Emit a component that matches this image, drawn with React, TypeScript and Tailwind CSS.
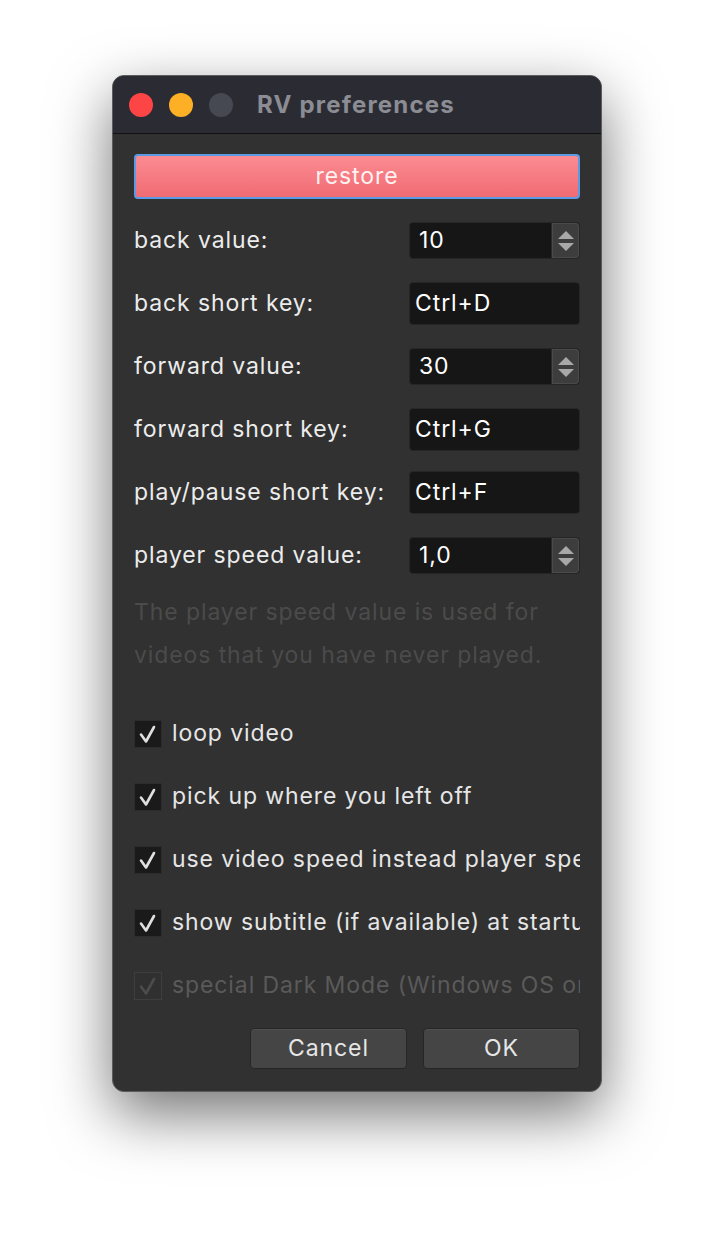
import React from "react";

const font = { fontFamily: "Inter, 'Noto Sans', 'Liberation Sans', sans-serif" };

function SpinArrows() {
  return (
    <div className="flex h-full w-[28px] items-center justify-center rounded-r-[4px] border-l border-[#2a2a2a] bg-[#3d3d3d] shadow-[inset_0_0_0_1px_#4a4a4a]">
      <svg width="18" height="26" viewBox="0 0 18 26">
        <polygon points="9,3 17,11 1,11" fill="#a8a8a8" />
        <polygon points="1,15 17,15 9,23" fill="#a8a8a8" />
      </svg>
    </div>
  );
}

function Field({ label, value, spin }: { label: string; value: string; spin?: boolean }) {
  return (
    <div className="flex h-[63px] items-center justify-between">
      <span className="text-[23px] tracking-[0.9px] text-[#ececec]">{label}</span>
      {spin ? (
        <div className="flex h-[37px] w-[171px] items-center rounded-[4px] border border-[#262626] bg-[#161616]">
          <span className="flex-1 pl-[9px] text-[23px] tracking-[0.9px] text-white">{value}</span>
          <SpinArrows />
        </div>
      ) : (
        <div className="flex h-[43px] w-[171px] items-center rounded-[4px] border border-[#262626] bg-[#161616] pl-[5px] text-[23px] tracking-[0.9px] text-white">
          {value}
        </div>
      )}
    </div>
  );
}

function Check({ label, disabled }: { label: string; disabled?: boolean }) {
  return (
    <div className="flex h-[63px] items-center overflow-hidden">
      <div
        className={
          disabled
            ? "flex h-[28px] w-[28px] shrink-0 items-center justify-center border border-[#3e3e3e] bg-[#303030]"
            : "flex h-[28px] w-[28px] shrink-0 items-center justify-center border border-[#2c2c2c] bg-[#1a1a1a]"
        }
      >
        <svg width="22" height="22" viewBox="0 0 22 22">
          <path
            d="M4 11.5 L9 18.5 L17 4"
            fill="none"
            stroke={disabled ? "#4c4c4c" : "#e0e0e0"}
            strokeWidth="2.6"
            strokeLinecap="round"
            strokeLinejoin="round"
          />
        </svg>
      </div>
      <span
        className={
          disabled
            ? "ml-[10px] min-w-0 overflow-hidden whitespace-nowrap text-[23px] tracking-[0.9px] text-[#5a5a5a]"
            : "ml-[10px] min-w-0 overflow-hidden whitespace-nowrap text-[23px] tracking-[0.9px] text-[#e6e6e6]"
        }
      >
        {label}
      </span>
    </div>
  );
}

export default function App() {
  return (
    <div className="h-[1240px] w-[714px] overflow-hidden bg-white pl-[112px] pt-[75px]" style={font}>
      <div className="flex h-[1017px] w-[490px] flex-col overflow-hidden rounded-[12px] border border-[#5c5c5c] bg-[#313131] shadow-[0_22px_60px_rgba(0,0,0,0.55)]">
        <div className="flex h-[58px] shrink-0 items-center border-b border-[#111] bg-[#2b2c33] pl-[16px]">
          <div className="h-[24px] w-[24px] rounded-full bg-[#fe4545]" />
          <div className="ml-[16px] h-[24px] w-[24px] rounded-full bg-[#fdb025]" />
          <div className="ml-[16px] h-[24px] w-[24px] rounded-full bg-[#474952]" />
          <span className="ml-[24px] text-[24px] font-bold tracking-[1.2px] text-[#8c8c94]">RV preferences</span>
        </div>

        <div className="flex flex-1 flex-col px-[21px] pt-[20px]">
          <button className="h-[45px] w-full rounded-[4px] border-2 border-[#5b9be6] bg-gradient-to-b from-[#fb8b91] to-[#f16b74] text-[23px] tracking-[0.9px] text-[#fff2f2]">
            restore
          </button>

          <div className="mt-[10px] flex flex-col">
            <Field label="back value:" value="10" spin />
            <Field label="back short key:" value="Ctrl+D" />
            <Field label="forward value:" value="30" spin />
            <Field label="forward short key:" value="Ctrl+G" />
            <Field label="play/pause short key:" value="Ctrl+F" />
            <Field label="player speed value:" value="1,0" spin />
          </div>

          <p className="mt-[4px] whitespace-nowrap text-[23px] leading-[43px] tracking-[0.9px] text-[#4b4b4b]">
            The player speed value is used for
            <br />
            videos that you have never played.
          </p>

          <div className="mt-[25px] flex flex-col">
            <Check label="loop video" />
            <Check label="pick up where you left off" />
            <Check label="use video speed instead player speed" />
            <Check label="show subtitle (if available) at startup" />
            <Check label="special Dark Mode (Windows OS only)" disabled />
          </div>

          <div className="mt-[11px] flex justify-end gap-[16px]">
            <button className="h-[41px] w-[157px] rounded-[4px] border border-[#262626] bg-[#454545] text-[23px] tracking-[0.9px] text-[#e6e6e6] shadow-[inset_0_1px_0_#505050]">
              Cancel
            </button>
            <button className="h-[41px] w-[157px] rounded-[4px] border border-[#262626] bg-[#454545] text-[23px] tracking-[0.9px] text-[#e6e6e6] shadow-[inset_0_1px_0_#505050]">
              OK
            </button>
          </div>
        </div>
      </div>
    </div>
  );
}
